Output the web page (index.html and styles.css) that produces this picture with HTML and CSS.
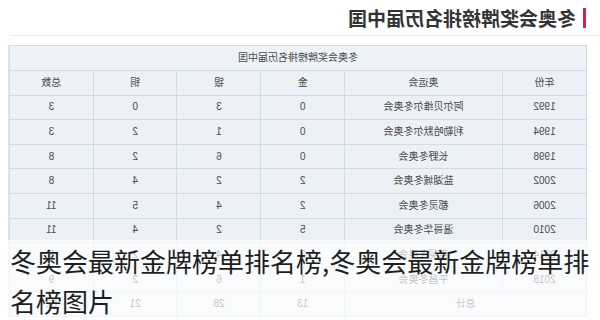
FILE: index.html
```html
<!DOCTYPE html>
<html lang="zh-CN">
<head>
  <meta charset="UTF-8" />
  <meta name="viewport" content="width=device-width, initial-scale=1.0" />
  <title>冬奥会奖牌榜排名历届中国</title>
  <link rel="stylesheet" href="styles.css">
</head>
<body>
  <div class="shot">
    <div class="head">
      <h2 class="title">冬奥会奖牌榜排名历届中国</h2>
    </div>

    <div class="board">
      <table class="medals">
        <colgroup>
          <col class="c-year">
          <col class="c-game">
          <col class="c-num">
          <col class="c-num">
          <col class="c-num">
          <col class="c-num">
        </colgroup>
        <tr class="cap"><td colspan="6">冬奥会奖牌榜排名历届中国</td></tr>
        <tr>
          <td>年份</td>
          <td>奥运会</td>
          <td>金</td>
          <td>银</td>
          <td>铜</td>
          <td>总数</td>
        </tr>
        <tr><td>1992</td><td>阿尔贝维尔冬奥会</td><td>0</td><td>3</td><td>0</td><td>3</td></tr>
        <tr><td>1994</td><td>利勒哈默尔冬奥会</td><td>0</td><td>1</td><td>2</td><td>3</td></tr>
        <tr><td>1998</td><td>长野冬奥会</td><td>0</td><td>6</td><td>2</td><td>8</td></tr>
        <tr><td>2002</td><td>盐湖城冬奥会</td><td>2</td><td>2</td><td>4</td><td>8</td></tr>
        <tr><td>2006</td><td>都灵冬奥会</td><td>2</td><td>4</td><td>5</td><td>11</td></tr>
        <tr><td>2010</td><td>温哥华冬奥会</td><td>5</td><td>2</td><td>4</td><td>11</td></tr>
        <tr><td>2014</td><td>索契冬奥会</td><td>3</td><td>4</td><td>2</td><td>9</td></tr>
        <tr><td>2018</td><td>平昌冬奥会</td><td>1</td><td>6</td><td>2</td><td>9</td></tr>
        <tr><td colspan="2">总计</td><td>13</td><td>28</td><td>21</td><td>62</td></tr>
      </table>
    </div>
  </div>

  <div class="overlay">冬奥会最新金牌榜单排名榜,冬奥会最新金牌榜单排名榜图片</div>
</body>
</html>
```

FILE: styles.css
```css
body {
  margin: 0;
  width: 600px;
  height: 320px;
  overflow: hidden;
  position: relative;
  background: #ffffff;
  font-family: "Noto Sans CJK SC", "Noto Sans", sans-serif;
}
/* the source picture is flipped left to right */
.shot {
  width: 600px;
  transform: scaleX(-1);
}
.head {
  height: 36px;
  margin-right: 10px;
  border-bottom: 1px solid #ececec;
  box-sizing: border-box;
  padding: 8px 0 0 14px;
}
.title {
  margin: 0;
  padding-left: 7px;
  border-left: 3px solid #d2224b;
  font-size: 19px;
  line-height: 20px;
  font-weight: 700;
  color: #333333;
}
.board {
  margin: 9px 0 0 13px;
  width: 578px;
  border-right: 1px solid #dfe5ec;
}
.medals {
  width: 577px;
  border-collapse: collapse;
  table-layout: fixed;
  background: #ecf1f8;
  font-family: "Liberation Sans", "Noto Sans CJK SC", sans-serif;
  font-size: 10px;
  line-height: 14px;
  color: #4a4a4a;
}
.medals td {
  border: 1px solid #d3dbe6;
  height: 23.6px;
  padding: 0;
  text-align: center;
}
.medals .cap td {
  height: 24px;
  background: #eef3f9;
}
.c-year {
  width: 84px;
}
.c-game {
  width: 158px;
}
.c-num {
  width: 83.75px;
}
.overlay {
  position: absolute;
  left: 0;
  right: 0;
  top: 240px;
  bottom: 0;
  padding: 1px 0 0 10px;
  background: rgba(255, 255, 255, 0.68);
  font-size: 26px;
  line-height: 40px;
  color: #1e1e1e;
}
```
